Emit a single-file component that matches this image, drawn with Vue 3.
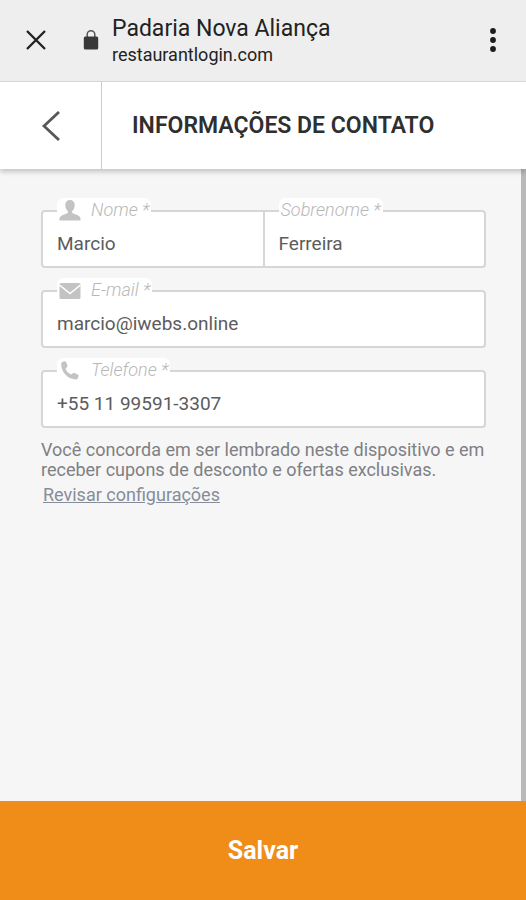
<script setup>
import { reactive } from 'vue'

const contact = reactive({
  firstName: 'Marcio',
  lastName: 'Ferreira',
  email: 'marcio@iwebs.online',
  phone: '+55 11 99591-3307',
})
</script>

<template>
  <div class="page">
    <header class="browser-bar">
      <button class="icon-button close" type="button" aria-label="Fechar">
        <svg width="20" height="20" viewBox="0 0 20 20">
          <path d="M1 1L19 19M19 1L1 19" fill="none" stroke="#222" stroke-width="2.4" />
        </svg>
      </button>
      <svg class="lock" width="16" height="20" viewBox="0 0 16 20">
        <path d="M4.200 7V4.500a3.800 3.800 0 0 1 7.600 0V7" fill="none" stroke="#555" stroke-width="1.5" />
        <rect x="0.8" y="6.500" width="14.400" height="13" rx="1.500" fill="#383838" />
      </svg>
      <div class="site">
        <div class="site-name">Padaria Nova Aliança</div>
        <div class="site-host">restaurantlogin.com</div>
      </div>
      <button class="icon-button more" type="button" aria-label="Mais opções">
        <svg width="6" height="24" viewBox="0 0 6 24">
          <circle cx="3" cy="3" r="2.9" fill="#1c1c1c" />
          <circle cx="3" cy="12" r="2.9" fill="#1c1c1c" />
          <circle cx="3" cy="21" r="2.9" fill="#1c1c1c" />
        </svg>
      </button>
    </header>

    <div class="title-bar">
      <button class="back" type="button" aria-label="Voltar">
        <svg width="20" height="30" viewBox="0 0 20 30">
          <path d="M18 1L3 15L18 29" fill="none" stroke="#585858" stroke-width="2.8" />
        </svg>
      </button>
      <h1>INFORMAÇÕES DE CONTATO</h1>
    </div>

    <main class="content">
      <form id="contact-form" class="fields" @submit.prevent>
        <div class="row">
          <div class="field">
            <label class="with-icon" for="first-name">
              <svg width="22" height="22" viewBox="0 0 22 22">
                <path d="M11 1C8 1 6.300 3 6.300 6c0 2.600 1 4.700 2.500 6v2C6.500 15.300 0.500 16.500 0.500 19.500V21.500h21V19.500c0-3-6-4.200-8.300-5.500v-2c1.500-1.300 2.500-3.400 2.500-6 0-3-1.700-5-4.700-5z" fill="#c3c3c3" />
              </svg>
              <span>Nome *</span>
            </label>
            <input id="first-name" v-model="contact.firstName" type="text" />
          </div>
          <div class="field">
            <label for="last-name"><span>Sobrenome *</span></label>
            <input id="last-name" v-model="contact.lastName" type="text" />
          </div>
        </div>
        <div class="field">
          <label class="with-icon" for="email">
            <svg width="22" height="22" viewBox="0 0 22 22">
              <rect x="0.500" y="4" width="21" height="16" rx="1.500" fill="#c3c3c3" />
              <path d="M0.500 6L11 14.500L21.500 6" fill="none" stroke="#fff" stroke-width="1.600" />
            </svg>
            <span>E-mail *</span>
          </label>
          <input id="email" v-model="contact.email" type="email" />
        </div>
        <div class="field">
          <label class="with-icon" for="phone">
            <svg width="22" height="22" viewBox="0 0 22 22">
              <path d="M2.200 4.500Q2.300 3.500 3.300 3L5.500 2.200Q6.600 2 7 3L8.400 6.600Q8.700 7.600 7.900 8.200L6.500 9.500Q8 13.800 12.300 15.500L13.800 14.200Q14.500 13.600 15.400 14L18.900 15.500Q19.800 16 19.500 17L18.800 19.200Q18.500 20.300 17.400 20.400C9 20.500 2 13.500 2.200 4.500z" fill="#c3c3c3" />
            </svg>
            <span>Telefone *</span>
          </label>
          <input id="phone" v-model="contact.phone" type="tel" />
        </div>
      </form>
      <p class="notice">Você concorda em ser lembrado neste dispositivo e em receber cupons de desconto e ofertas exclusivas.</p>
      <a class="review" href="#">Revisar configurações</a>
    </main>

    <button class="save" type="submit" form="contact-form">Salvar</button>
  </div>
</template>

<style>
body {
  margin: 0;
}
</style>

<style scoped>
.page {
  display: flex;
  flex-direction: column;
  min-height: 100vh;
  background: #f6f6f6;
  font-family: Roboto, "Liberation Sans", sans-serif;
}

.page *,
.page {
  box-sizing: border-box;
}

button {
  padding: 0;
  border: 0;
  background: none;
  font-family: inherit;
  cursor: pointer;
}

svg {
  display: block;
  flex: none;
}

.browser-bar {
  display: flex;
  align-items: center;
  height: 82px;
  padding: 0 30px 2px 26px;
  border-bottom: 1px solid #dcdcdc;
  background: #eee;
}

.lock {
  margin: 0 13px 0 37px;
}

.site {
  flex: 1;
  padding-top: 2px;
  color: #222;
}

.site-name {
  font-size: 23px;
  line-height: 28px;
}

.site-host {
  font-size: 18px;
  line-height: 24px;
}

.title-bar {
  display: flex;
  height: 87px;
  background: #fff;
  box-shadow: 0 3px 5px rgba(0, 0, 0, 0.2);
  position: relative;
  z-index: 1;
}

.back {
  display: flex;
  align-items: center;
  justify-content: center;
  width: 102px;
  border-right: 1px solid #ccc;
}

h1 {
  margin: 0;
  padding-left: 30px;
  color: #2f2f2f;
  font-size: 23px;
  font-weight: 600;
  line-height: 87px;
}

.content {
  flex: 1;
  padding: 41px 35px 24px 41px;
  border-right: 5px solid #b9b9b9;
}

.fields {
  display: flex;
  flex-direction: column;
  gap: 22px;
}

.row {
  display: flex;
}

.field {
  position: relative;
  flex: 1;
  height: 58px;
  border: 2px solid #d6d6d6;
  border-radius: 4px;
  background: #fff;
}

.row .field:first-child {
  border-right-width: 1px;
  border-radius: 4px 0 0 4px;
}

.row .field:last-child {
  border-left-width: 1px;
  border-radius: 0 4px 4px 0;
}

label {
  position: absolute;
  top: -14px;
  left: 14px;
  display: flex;
  align-items: center;
  gap: 10px;
  height: 24px;
  padding: 0 2px;
  border-radius: 6px;
  background: #fff;
  color: #b8b8b8;
  font-size: 18px;
  font-style: italic;
  font-weight: 300;
  line-height: 24px;
  white-space: nowrap;
}

input {
  display: block;
  width: 100%;
  height: 54px;
  padding: 8px 14px 0;
  border: 0;
  outline: 0;
  background: transparent;
  color: #5c5c5c;
  font-family: inherit;
  font-size: 19px;
}

.notice {
  margin: 12px 0 5px;
  color: #7e8084;
  font-size: 18px;
  line-height: 20px;
}

.review {
  display: block;
  width: fit-content;
  margin-left: 2px;
  color: #868d99;
  font-size: 18px;
  line-height: 20px;
}

.save {
  height: 99px;
  background: #ef8d18;
  color: #fff;
  font-size: 25px;
  font-weight: 700;
}
</style>
